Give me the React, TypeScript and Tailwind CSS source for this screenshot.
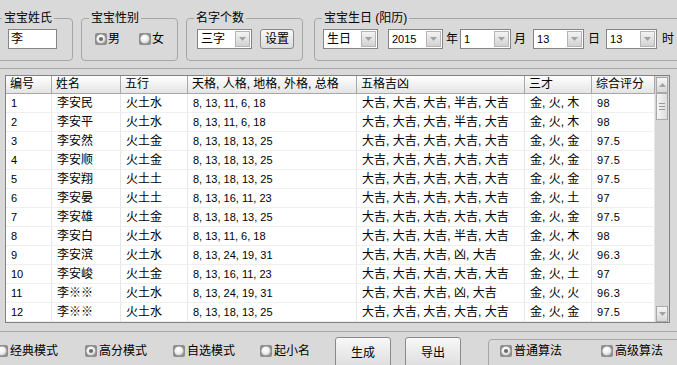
import React from "react";

const Radio = ({ checked }: { checked?: boolean }) => (
  <svg width="12" height="12" viewBox="0 0 12 12" className="shrink-0">
    <defs>
      <radialGradient id="rg" cx="40%" cy="35%" r="70%">
        <stop offset="0%" stopColor="#ffffff" />
        <stop offset="60%" stopColor="#eeeeee" />
        <stop offset="100%" stopColor="#bdbdbd" />
      </radialGradient>
    </defs>
    <rect x="0" y="0" width="12" height="12" rx="2" fill="#8e8e8e" />
    <circle cx="6" cy="6" r="4.6" fill="url(#rg)" />
    {checked && <circle cx="6" cy="6" r="2.1" fill="#6b6b6b" />}
  </svg>
);

const Arrow = () => (
  <div className="w-[15px] h-full shrink-0 border border-[#b4b4b4] bg-gradient-to-b from-[#f4f4f4] to-[#d2d2d2] flex items-center justify-center">
    <svg width="7" height="4" viewBox="0 0 7 4">
      <polygon points="0,0 7,0 3.5,4" fill="#a2a2a2" />
    </svg>
  </div>
);

const Combo = ({ value, className, num }: { value: string; className: string; num?: boolean }) => (
  <div className={`h-[20px] shrink-0 bg-white border border-[#858585] p-[1px] flex items-center ${className}`}>
    <span className={`flex-1 pl-[2px] leading-[16px] ${num ? "text-[11px]" : "text-[12px]"}`}>{value}</span>
    <Arrow />
  </div>
);

const Btn = ({ label, className }: { label: string; className: string }) => (
  <div className={`shrink-0 border border-[#8a8a8a] rounded-[3px] bg-gradient-to-b from-[#f8f8f8] to-[#dcdcdc] flex items-center justify-center text-[12px] ${className}`}>
    {label}
  </div>
);

const Group = ({ title, className, children }: { title: string; className: string; children: React.ReactNode }) => (
  <fieldset className={`h-[51px] shrink-0 border border-[#a6a6a6] rounded-[4px] ${className}`}>
    <legend className="ml-[7px] px-[2px] text-[12px] leading-[16px]">{title}</legend>
    {children}
  </fieldset>
);

const rows: string[][] = [
  ["1", "李安民", "火土水", "8, 13, 11, 6, 18", "大吉, 大吉, 大吉, 半吉, 大吉", "金, 火, 木", "98"],
  ["2", "李安平", "火土水", "8, 13, 11, 6, 18", "大吉, 大吉, 大吉, 半吉, 大吉", "金, 火, 木", "98"],
  ["3", "李安然", "火土金", "8, 13, 18, 13, 25", "大吉, 大吉, 大吉, 大吉, 大吉", "金, 火, 金", "97.5"],
  ["4", "李安顺", "火土金", "8, 13, 18, 13, 25", "大吉, 大吉, 大吉, 大吉, 大吉", "金, 火, 金", "97.5"],
  ["5", "李安翔", "火土土", "8, 13, 18, 13, 25", "大吉, 大吉, 大吉, 大吉, 大吉", "金, 火, 金", "97.5"],
  ["6", "李安晏", "火土土", "8, 13, 16, 11, 23", "大吉, 大吉, 大吉, 大吉, 大吉", "金, 火, 土", "97"],
  ["7", "李安雄", "火土金", "8, 13, 18, 13, 25", "大吉, 大吉, 大吉, 大吉, 大吉", "金, 火, 金", "97.5"],
  ["8", "李安白", "火土水", "8, 13, 11, 6, 18", "大吉, 大吉, 大吉, 半吉, 大吉", "金, 火, 木", "98"],
  ["9", "李安滨", "火土水", "8, 13, 24, 19, 31", "大吉, 大吉, 大吉, 凶, 大吉", "金, 火, 火", "96.3"],
  ["10", "李安峻", "火土金", "8, 13, 16, 11, 23", "大吉, 大吉, 大吉, 大吉, 大吉", "金, 火, 土", "97"],
  ["11", "李※※", "火土水", "8, 13, 24, 19, 31", "大吉, 大吉, 大吉, 凶, 大吉", "金, 火, 火", "96.3"],
  ["12", "李※※", "火土水", "8, 13, 18, 13, 25", "大吉, 大吉, 大吉, 大吉, 大吉", "金, 火, 金", "97.5"],
];

const headers = ["编号", "姓名", "五行", "天格, 人格, 地格, 外格, 总格", "五格吉凶", "三才", "综合评分"];
const numCols = [0, 3, 6];

const RadioItem = ({ label, checked, className }: { label: string; checked?: boolean; className: string }) => (
  <div className={`shrink-0 mt-[8px] h-[12px] flex items-center gap-[2px] ${className}`}>
    <Radio checked={checked} />
    <span className="text-[12px] leading-[12px] whitespace-nowrap">{label}</span>
  </div>
);

export default function App() {
  return (
    <div
      className="w-[677px] h-[365px] overflow-hidden bg-[#d9d9d9] text-black"
      style={{ fontFamily: '"Liberation Sans", "Noto Sans CJK SC", sans-serif' }}
    >
      {/* top groups */}
      <div className="h-[61px] pt-[10px] ml-[-6px] flex items-start">
        <Group title="宝宝姓氏" className="w-[79px]">
          <div className="mt-[3px] pl-[13px]">
            <div className="w-[49px] h-[20px] bg-white border border-[#858585] pl-[2px] text-[12px] leading-[18px]">李</div>
          </div>
        </Group>
        <Group title="宝宝性别" className="w-[97px] ml-[8px]">
          <div className="mt-[3px] pl-[13px] h-[20px] flex items-center text-[12px]">
            <Radio checked />
            <span className="ml-[1px]">男</span>
            <span className="ml-[19px]"><Radio /></span>
            <span className="ml-[1px]">女</span>
          </div>
        </Group>
        <Group title="名字个数" className="w-[117px] ml-[8px]">
          <div className="mt-[3px] pl-[10px] flex gap-[8px]">
            <Combo value="三字" className="w-[55px]" />
            <Btn label="设置" className="w-[34px] h-[20px]" />
          </div>
        </Group>
        <Group title="宝宝生日 (阳历)" className="w-[400px] ml-[11px]">
          <div className="mt-[3px] pl-[8px] flex items-center text-[12px]">
            <Combo value="生日" className="w-[55px]" />
            <Combo value="2015" num className="w-[55px] ml-[10px]" />
            <span className="ml-[3px]">年</span>
            <Combo value="1" num className="w-[51px] ml-[2px]" />
            <span className="ml-[3px]">月</span>
            <Combo value="13" num className="w-[51px] ml-[7px]" />
            <span className="ml-[4px]">日</span>
            <Combo value="13" num className="w-[51px] ml-[6px]" />
            <span className="ml-[5px]">时</span>
          </div>
        </Group>
      </div>

      <div className="mt-[7px] border-t border-[#a6a6a6]" />

      {/* table */}
      <div className="mt-[6px] ml-[5px] w-[665px] h-[248px] border border-[#828282] bg-white flex">
        <div className="w-[649px] flex flex-col">
          <div className="grid grid-cols-[46px_69px_67px_169px_168px_67px_63px] h-[18px] border-b border-[#a8a8a8] bg-gradient-to-b from-[#ffffff] to-[#e4e4e4]">
            {headers.map((h, i) => (
              <div key={i} className="pl-[4px] text-[12px] leading-[17px] border-r border-[#a8a8a8] whitespace-nowrap overflow-hidden">
                {h}
              </div>
            ))}
          </div>
          {rows.map((r, ri) => (
            <div key={ri} className="grid grid-cols-[46px_69px_67px_169px_168px_67px_63px] h-[19px] border-b border-[#efefef]">
              {r.map((c, ci) => (
                <div
                  key={ci}
                  className={`pl-[5px] leading-[18px] border-r border-[#e6e6e6] whitespace-nowrap overflow-hidden ${
                    numCols.includes(ci) ? "text-[11px]" : "text-[12px]"
                  } ${ci === 6 ? "tracking-[0.5px]" : ""}`}
                >
                  {c}
                </div>
              ))}
            </div>
          ))}
        </div>
        {/* scrollbar */}
        <div className="w-[14px] bg-[#d6d6d6] px-[1px] pt-[1px] flex flex-col">
          <div className="h-[16px] border border-[#a9a9a9] bg-gradient-to-b from-[#f6f6f6] to-[#d8d8d8] flex items-center justify-center">
            <svg width="7" height="4" viewBox="0 0 7 4">
              <polygon points="0,4 7,4 3.5,0" fill="#a2a2a2" />
            </svg>
          </div>
          <div className="h-[27px] border border-[#a9a9a9] bg-gradient-to-r from-[#f6f6f6] to-[#dcdcdc] flex flex-col items-center justify-center gap-[2px]">
            <div className="w-[6px] h-[1px] bg-[#9a9a9a]" />
            <div className="w-[6px] h-[1px] bg-[#9a9a9a]" />
            <div className="w-[6px] h-[1px] bg-[#9a9a9a]" />
          </div>
          <div className="flex-1" />
          <div className="h-[16px] border border-[#a9a9a9] bg-gradient-to-b from-[#f6f6f6] to-[#d8d8d8] flex items-center justify-center">
            <svg width="7" height="4" viewBox="0 0 7 4">
              <polygon points="0,0 7,0 3.5,4" fill="#a2a2a2" />
            </svg>
          </div>
        </div>
      </div>

      <div className="mt-[8px] border-t border-[#a6a6a6]" />

      {/* bottom row */}
      <div className="mt-[5px] ml-[-4px] flex items-start">
        <RadioItem label="经典模式" className="w-[89px]" />
        <RadioItem label="高分模式" checked className="w-[88px]" />
        <RadioItem label="自选模式" className="w-[87px]" />
        <RadioItem label="起小名" className="w-[75px]" />
        <Btn label="生成" className="w-[56px] h-[32px]" />
        <Btn label="导出" className="w-[56px] h-[32px] ml-[14px]" />
        <div className="ml-[27px] mt-[2px] w-[220px] h-[40px] shrink-0 border border-[#a6a6a6] rounded-[4px] pl-[11px] pt-[5px] flex items-start">
          <RadioItem label="普通算法" checked className="w-[101px] !mt-0" />
          <RadioItem label="高级算法" className="w-[101px] !mt-0" />
        </div>
      </div>
    </div>
  );
}
